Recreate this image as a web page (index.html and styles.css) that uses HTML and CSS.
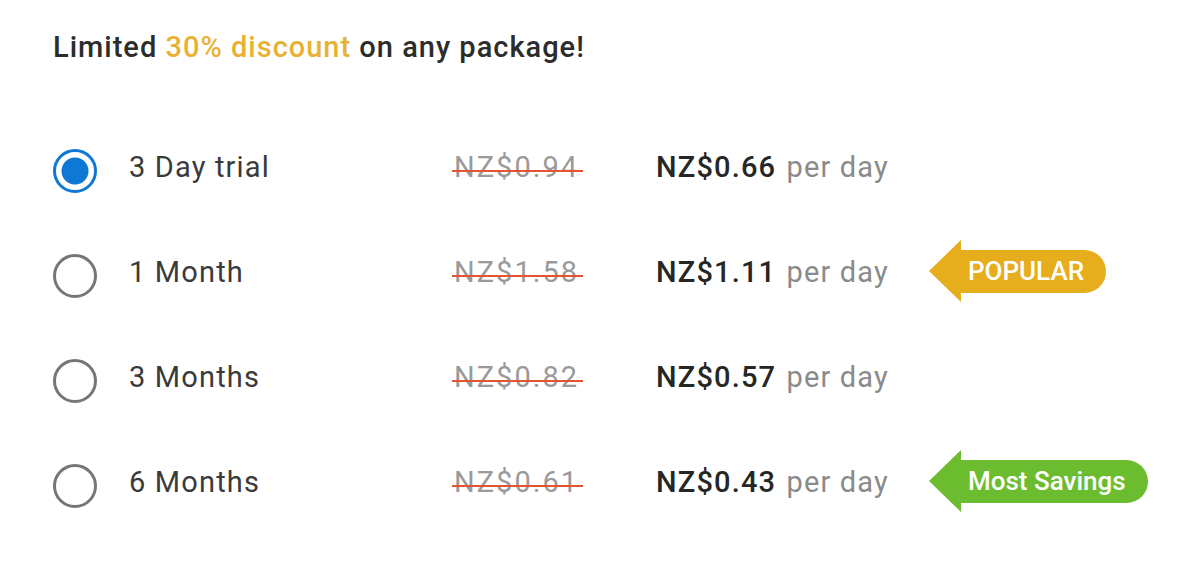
FILE: index.html
```html
<!DOCTYPE html>
<html lang="en">
<head>
    <meta charset="UTF-8">
    <title>Packages</title>
    <link rel="stylesheet" href="styles.css">
</head>
<body>
    <div class="offer">
        <p class="headline">Limited <span class="hl">30% discount</span> on any package!</p>

        <ul class="plans">
            <li class="plan">
                <span class="radio checked"></span>
                <span class="name">3 Day trial</span>
                <span class="old">NZ$0.94</span>
                <span class="price"><b>NZ$0.66</b> per day</span>
            </li>
            <li class="plan">
                <span class="radio"></span>
                <span class="name">1 Month</span>
                <span class="old">NZ$1.58</span>
                <span class="price"><b>NZ$1.11</b> per day</span>
                <span class="tag tag-popular">POPULAR</span>
            </li>
            <li class="plan">
                <span class="radio"></span>
                <span class="name">3 Months</span>
                <span class="old">NZ$0.82</span>
                <span class="price"><b>NZ$0.57</b> per day</span>
            </li>
            <li class="plan">
                <span class="radio"></span>
                <span class="name">6 Months</span>
                <span class="old">NZ$0.61</span>
                <span class="price"><b>NZ$0.43</b> per day</span>
                <span class="tag tag-savings">Most Savings</span>
            </li>
        </ul>
    </div>
</body>
</html>
```

FILE: styles.css
```css
body {
    margin: 0;
    background-color: #fff;
    font-family: Roboto, "Liberation Sans", sans-serif;
    color: #333;
}

.offer {
    padding: 30px 0 0 53px;
}

.headline {
    margin: 0;
    font-size: 29px;
    line-height: 34px;
    letter-spacing: 1px;
    font-weight: 500;
    color: #2c2c2c;
}

.hl {
    color: #e9b132;
}

.plans {
    list-style: none;
    margin: 50px 0 0;
    padding: 0;
}

.plan {
    display: flex;
    align-items: center;
    height: 105px;
    font-size: 29px;
    letter-spacing: 0.04em;
}

.radio {
    box-sizing: border-box;
    width: 44px;
    height: 44px;
    border: 3px solid #767676;
    border-radius: 50%;
    margin: 8px 32px 0 0;
    flex-shrink: 0;
}

.radio.checked {
    border-color: #0f78d4;
    background: radial-gradient(circle, #0f78d4 0 13px, #fff 14px);
}

.name {
    width: 325px;
    color: #3a3a3a;
}

.old {
    position: relative;
    width: 202px;
    letter-spacing: 0.07em;
    color: #9a9a9a;
}

.old::after {
    content: "";
    position: absolute;
    left: -2px;
    width: 131px;
    top: 60%;
    height: 2px;
    background-color: #e25432;
}

.price {
    width: 273px;
    color: #8a8a8a;
}

.price b {
    font-weight: 500;
    color: #262626;
    margin-right: 2px;
}

.tag {
    position: relative;
    height: 43px;
    line-height: 43px;
    margin-left: 32px;
    padding: 0 22px 0 7px;
    border-radius: 0 22px 22px 0;
    font-size: 26px;
    letter-spacing: 0;
    font-weight: 500;
    color: #fff;
}

/* arrow head on the left side of the badge */
.tag::before {
    content: "";
    position: absolute;
    left: -32px;
    top: -10px;
    border-style: solid;
    border-width: 31px 32px 31px 0;
    border-color: transparent;
}

.tag-popular {
    background-color: #e6ad1c;
}

.tag-popular::before {
    border-right-color: #e6ad1c;
}

.tag-savings {
    background-color: #6bbd2f;
}

.tag-savings::before {
    border-right-color: #6bbd2f;
}
```
